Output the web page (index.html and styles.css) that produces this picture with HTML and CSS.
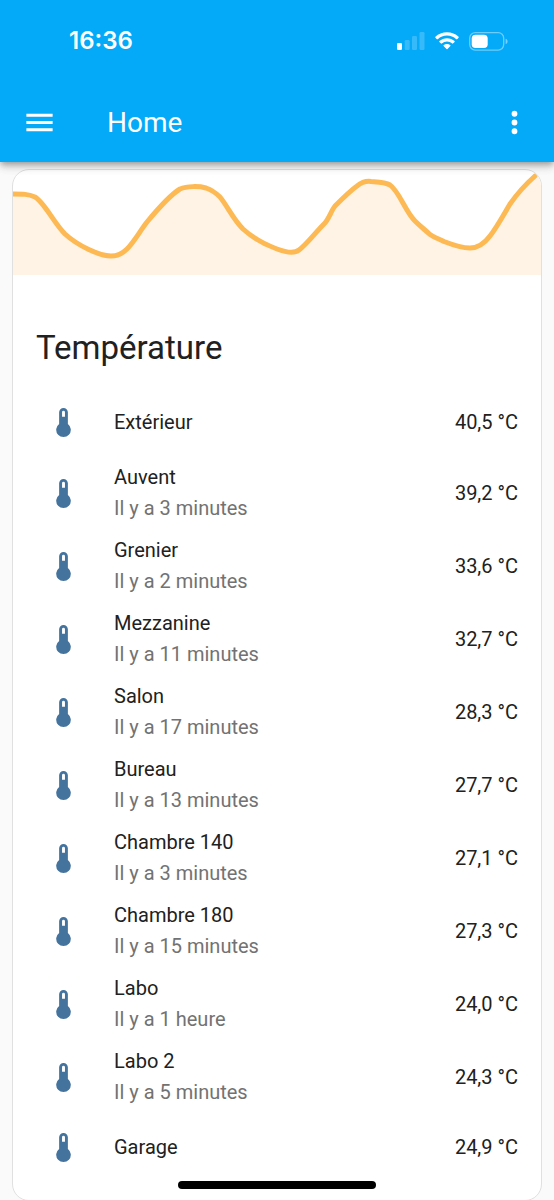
FILE: index.html
```html
<!DOCTYPE html>
<html lang="fr">
<head>
<meta charset="utf-8">
<meta name="viewport" content="width=device-width, initial-scale=1">
<title>Home</title>
<link rel="stylesheet" href="styles.css">
</head>
<body>
<svg class="symbols" aria-hidden="true">
  <symbol id="thermometer" viewBox="0 0 24 24"><path d="M15 13V5A3 3 0 0 0 9 5V13A5 5 0 1 0 15 13M12 4A1 1 0 0 1 13 5V8H11V5A1 1 0 0 1 12 4Z"/></symbol>
</svg>
<header class="header">
  <div class="status">
    <time class="clock">16:36</time>
    <div class="indicators">
      <svg class="signal" viewBox="0 0 28 18" aria-label="Signal">
        <rect x="0" y="11" width="5" height="7" rx="1.3"/>
        <g opacity=".2"><rect x="7.7" y="8" width="5" height="10" rx="1.3"/><rect x="15" y="4" width="5" height="14" rx="1.3"/><rect x="22.5" y="0" width="5" height="18" rx="1.3"/></g>
      </svg>
      <svg class="wifi" viewBox="0 0 24 18" aria-label="Wi-Fi">
        <path d="M12 0.3C7.5 .3 3.4 2 .4 4.8c-.3.3-.3.6 0 .9l1.5 1.5c.2.2.6.2.9 0A13.5 13.5 0 0 1 12 3.6c3.500 0 6.700 1.300 9.200 3.600.3.200.7.200.9 0l1.500-1.500c.3-.3.3-.6 0-.9C20.600 2 16.500.3 12 .3z"/>
        <path d="M12 6.200c-2.900 0-5.600 1.100-7.600 2.900-.3.300-.3.600 0 .9l1.600 1.600c.2.200.6.200.8 0A7.700 7.700 0 0 1 12 9.500c2 0 3.800.8 5.200 2.100.2.200.6.200.8 0l1.600-1.600c.3-.3.3-.6 0-.9C17.600 7.300 14.900 6.200 12 6.200z"/>
        <path d="M12 12c-1.300 0-2.500.5-3.400 1.200-.3.300-.3.600 0 .9l2.900 2.900c.3.300.7.300 1 0l2.900-2.900c.3-.3.3-.6 0-.9A5.400 5.400 0 0 0 12 12z"/>
      </svg>
      <svg class="battery" viewBox="0 0 39 19" aria-label="Batterie">
        <rect x=".7" y=".7" width="34" height="17.400" rx="5.500" fill="none" stroke="#fff" stroke-opacity=".42" stroke-width="1.300"/>
        <rect x="2.700" y="2.700" width="16" height="13.400" rx="3.800"/>
        <path d="M36.600 6.800c1.300.3 2 1.400 2 2.600s-.7 2.300-2 2.600z" opacity=".45"/>
      </svg>
    </div>
  </div>
  <div class="toolbar">
    <button class="icon-button" aria-label="Menu"><svg class="icon" viewBox="0 0 24 24"><path d="M3 6H21V8H3V6M3 11H21V13H3V11M3 16H21V18H3V16Z"/></svg></button>
    <h1 class="title">Home</h1>
    <button class="icon-button" aria-label="Options"><svg class="icon" viewBox="0 0 24 24"><path d="M12 16A2 2 0 1 1 12 20A2 2 0 1 1 12 16M12 10A2 2 0 1 1 12 14A2 2 0 1 1 12 10M12 4A2 2 0 1 1 12 8A2 2 0 1 1 12 4Z"/></svg></button>
  </div>
</header>
<main class="view">
  <section class="card">
    <svg class="graph" viewBox="0 0 528 105" aria-hidden="true">
      <path class="area" d="M0 24C10 24 15 24 22 27C31 32 41 53 52 64C65 76 87 86 98 86C104 86 109 84 114 79C121 72 127 61 134 52C144 40 157 25 167 19C174 16 186 16 193 18C199 20 203 23 207 27C215 37 220 49 230 59C240 68 250 74 264 79C272 82 281 84 286 80C294 74 302 63 311 54C316 49 318 41 322 36C329 29 337 21 344 16C349 12 354 11 358 11.500C365 12 372 12 377 15C386 21 392 41 402 51C407 56 411 59 417 64.500C422 68 426 69 431 71.500C440 75 450 78 457 78C465 78 471 74 477 66C484 57 491 44 497 34C504 24 513 14 522 6L528 2V105H0Z"/>
      <path class="line" d="M0 24C10 24 15 24 22 27C31 32 41 53 52 64C65 76 87 86 98 86C104 86 109 84 114 79C121 72 127 61 134 52C144 40 157 25 167 19C174 16 186 16 193 18C199 20 203 23 207 27C215 37 220 49 230 59C240 68 250 74 264 79C272 82 281 84 286 80C294 74 302 63 311 54C316 49 318 41 322 36C329 29 337 21 344 16C349 12 354 11 358 11.500C365 12 372 12 377 15C386 21 392 41 402 51C407 56 411 59 417 64.500C422 68 426 69 431 71.500C440 75 450 78 457 78C465 78 471 74 477 66C484 57 491 44 497 34C504 24 513 14 522 6"/>
    </svg>
    <h2 class="card-title">Température</h2>
    <ul class="rows">
      <li class="row"><svg class="icon"><use href="#thermometer"/></svg><div class="info"><span>Extérieur</span></div><span>40,5 °C</span></li>
      <li class="row"><svg class="icon"><use href="#thermometer"/></svg><div class="info"><span>Auvent</span><span class="ago">Il y a 3 minutes</span></div><span>39,2 °C</span></li>
      <li class="row"><svg class="icon"><use href="#thermometer"/></svg><div class="info"><span>Grenier</span><span class="ago">Il y a 2 minutes</span></div><span>33,6 °C</span></li>
      <li class="row"><svg class="icon"><use href="#thermometer"/></svg><div class="info"><span>Mezzanine</span><span class="ago">Il y a 11 minutes</span></div><span>32,7 °C</span></li>
      <li class="row"><svg class="icon"><use href="#thermometer"/></svg><div class="info"><span>Salon</span><span class="ago">Il y a 17 minutes</span></div><span>28,3 °C</span></li>
      <li class="row"><svg class="icon"><use href="#thermometer"/></svg><div class="info"><span>Bureau</span><span class="ago">Il y a 13 minutes</span></div><span>27,7 °C</span></li>
      <li class="row"><svg class="icon"><use href="#thermometer"/></svg><div class="info"><span>Chambre 140</span><span class="ago">Il y a 3 minutes</span></div><span>27,1 °C</span></li>
      <li class="row"><svg class="icon"><use href="#thermometer"/></svg><div class="info"><span>Chambre 180</span><span class="ago">Il y a 15 minutes</span></div><span>27,3 °C</span></li>
      <li class="row"><svg class="icon"><use href="#thermometer"/></svg><div class="info"><span>Labo</span><span class="ago">Il y a 1 heure</span></div><span>24,0 °C</span></li>
      <li class="row"><svg class="icon"><use href="#thermometer"/></svg><div class="info"><span>Labo 2</span><span class="ago">Il y a 5 minutes</span></div><span>24,3 °C</span></li>
      <li class="row"><svg class="icon"><use href="#thermometer"/></svg><div class="info"><span>Garage</span></div><span>24,9 °C</span></li>
    </ul>
  </section>
</main>
<div class="home-indicator"></div>
</body>
</html>
```
FILE: styles.css
```css
* { box-sizing: border-box; }

body {
  margin: 0;
  background: #fafafa;
  color: #212121;
  font: 20px/31px Roboto, sans-serif;
}

.symbols { display: none; }

.header {
  position: relative;
  background: #04a9f8;
  color: #fff;
  box-shadow: 0 3px 6px -1px rgba(0, 0, 0, .3), 0 6px 8px rgba(0, 0, 0, .1), 0 1px 14px rgba(0, 0, 0, .08);
}

.status {
  display: flex;
  align-items: center;
  justify-content: space-between;
  height: 82px;
  padding: 0 46px 0 69px;
}

.clock { font: 600 24px/30px Inter, sans-serif; }

.indicators {
  display: flex;
  align-items: center;
  gap: 10px;
  fill: #fff;
}

.signal { width: 28px; height: 18px; }
.wifi { width: 24px; height: 18px; }
.battery { width: 39px; height: 19px; }

.toolbar {
  display: flex;
  align-items: center;
  height: 80px;
  padding: 0 6px 0 5px;
}

.icon-button {
  display: grid;
  place-items: center;
  width: 68px;
  height: 68px;
  padding: 0;
  border: 0;
  background: none;
  color: inherit;
}

.icon {
  width: 35px;
  height: 35px;
  flex: none;
  fill: currentColor;
}

.title {
  flex: 1;
  margin: 0;
  padding-left: 34px;
  font-size: 28px;
  font-weight: 400;
}

.view { padding: 7px 12px 0; }

.card {
  overflow: hidden;
  border: 1px solid #e0e0e0;
  border-radius: 17px;
  background: #fff;
}

.graph { display: block; width: 100%; }
.area { fill: #fff3e5; }

.line {
  fill: none;
  stroke: #fdb954;
  stroke-width: 5;
  stroke-linecap: round;
  stroke-linejoin: round;
}

.card-title {
  margin: 0;
  padding: 50px 23px 23px;
  font-size: 33px;
  font-weight: 400;
  line-height: 46px;
}

.rows {
  display: flex;
  flex-direction: column;
  gap: 11px;
  margin: 0;
  padding: 0 23px 24px;
  list-style: none;
}

.row {
  display: flex;
  align-items: center;
  min-height: 57px;
  padding-left: 10px;
}

.row .icon { color: #44739e; }

.info {
  display: flex;
  flex: 1;
  flex-direction: column;
  padding-left: 33px;
}

.ago { color: #727272; }

.home-indicator {
  position: fixed;
  bottom: 11px;
  left: 50%;
  width: 198px;
  height: 8px;
  margin-left: -99px;
  border-radius: 4px;
  background: #000;
}
```
